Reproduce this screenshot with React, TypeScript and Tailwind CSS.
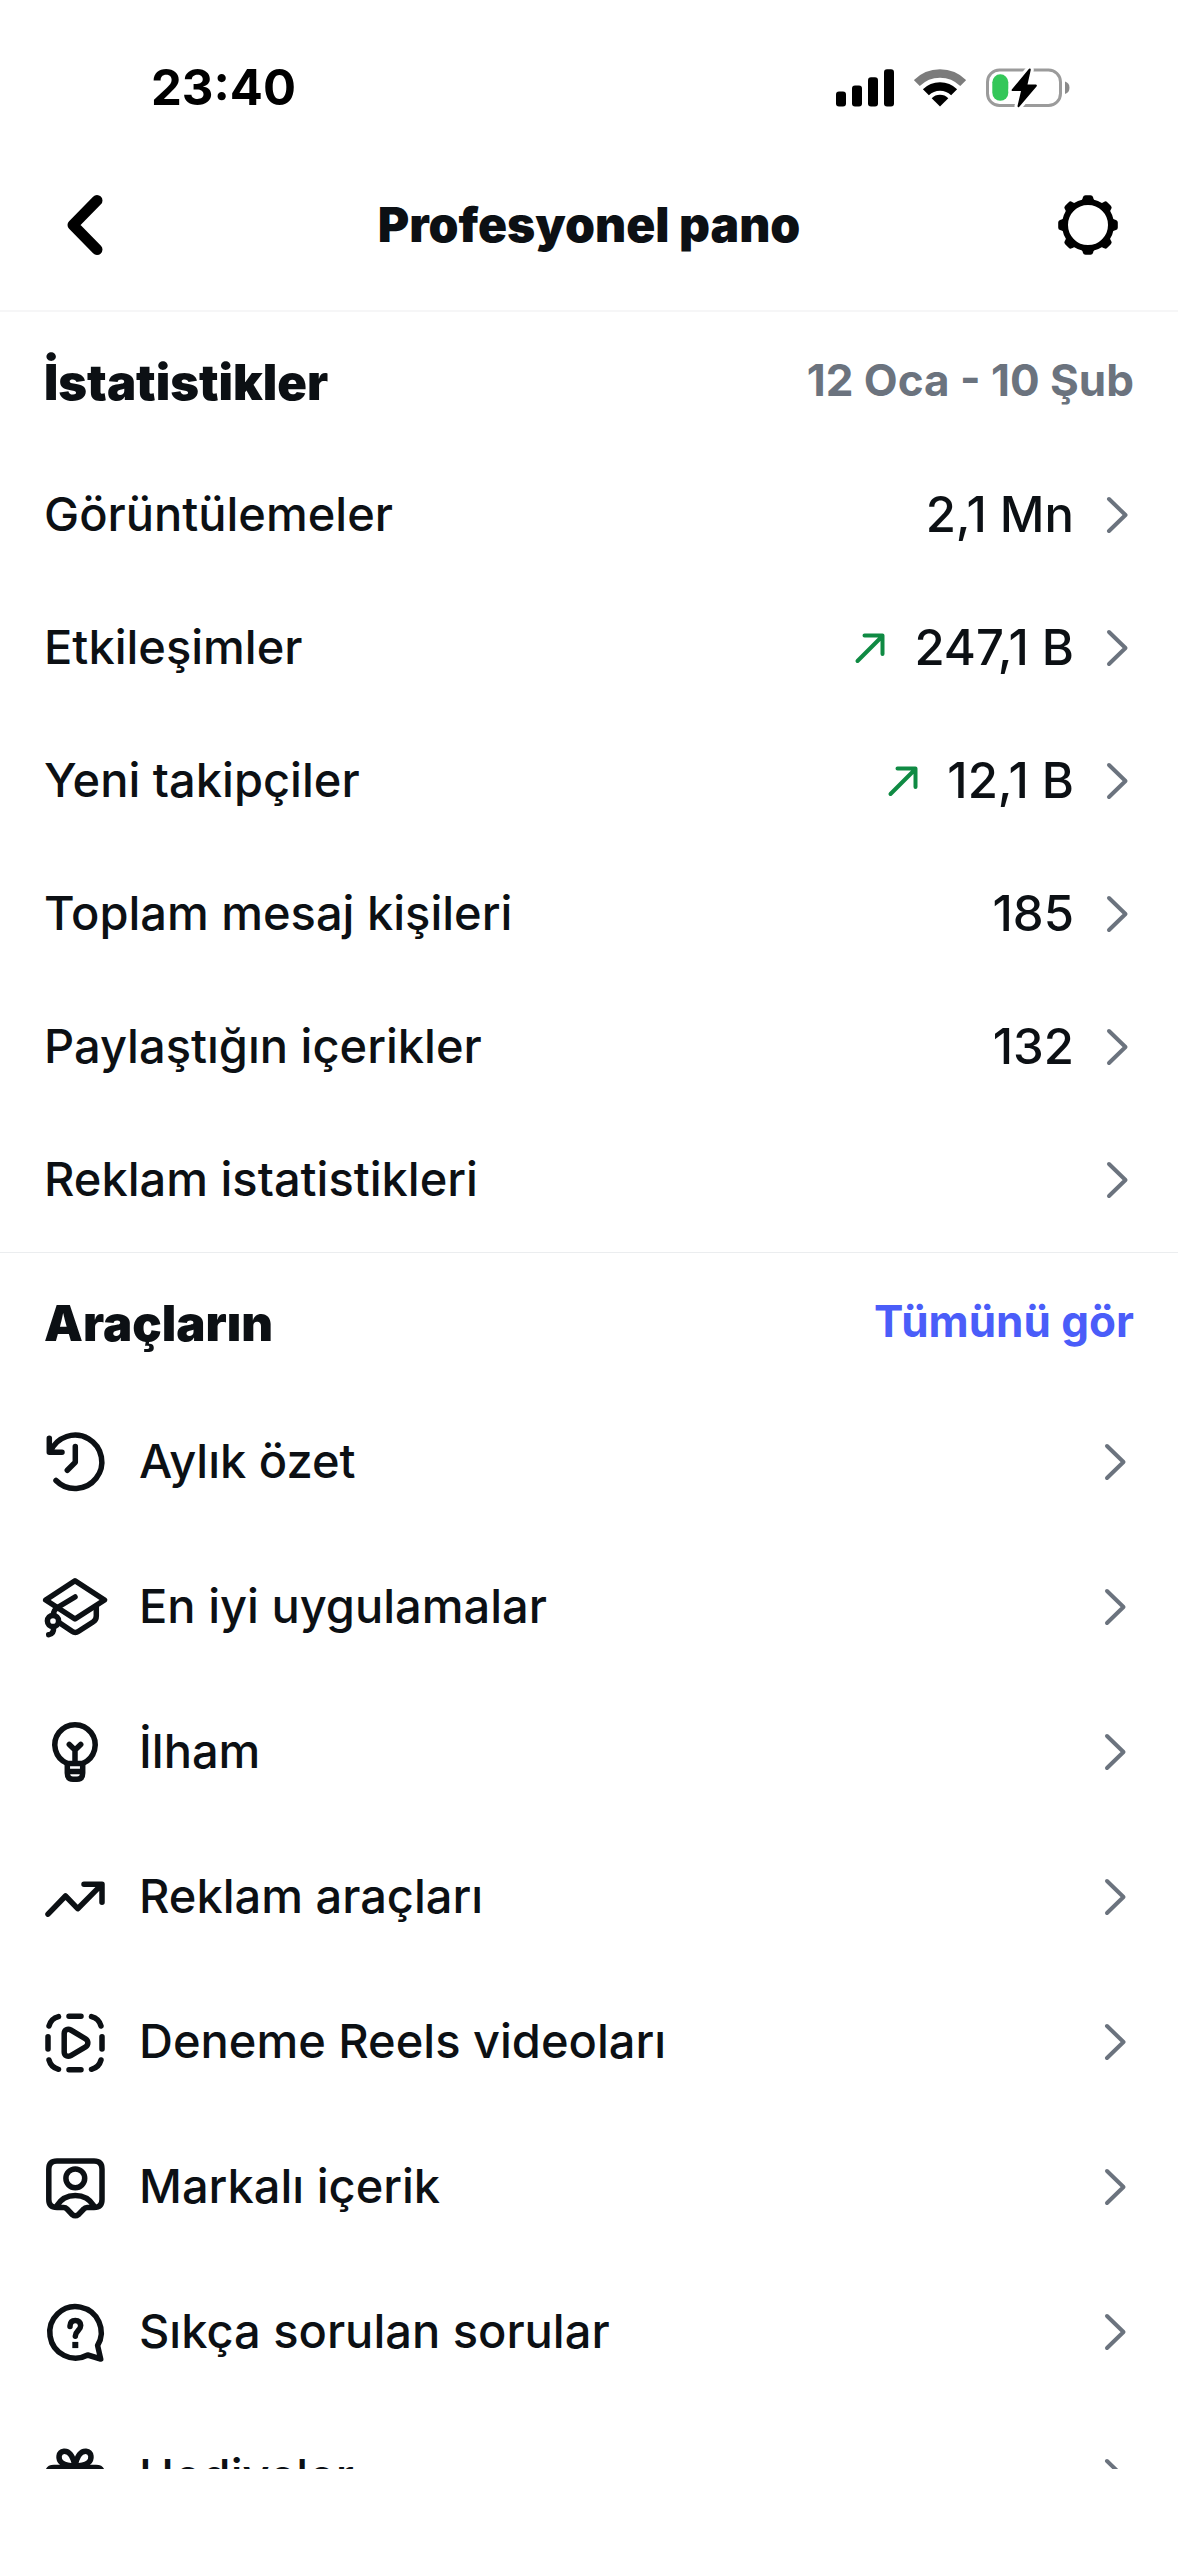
import type { ReactNode } from 'react'

type Stat = { label: string; value?: string; rising?: boolean }
type Tool = { label: string; icon: ReactNode }

const stats: Stat[] = [
  { label: 'Görüntülemeler', value: '2,1 Mn' },
  { label: 'Etkileşimler', value: '247,1 B', rising: true },
  { label: 'Yeni takipçiler', value: '12,1 B', rising: true },
  { label: 'Toplam mesaj kişileri', value: '185' },
  { label: 'Paylaştığın içerikler', value: '132' },
  { label: 'Reklam istatistikleri' },
]

const tools: Tool[] = [
  {
    label: 'Aylık özet',
    icon: (
      <>
        <path d="M14 51.5A26.7 26.7 0 1 0 8.5 22.5" />
        <path d="M7.3 9.3V23.3H20M33.3 17.5V33.3L25.3 41.3" />
      </>
    ),
  },
  {
    label: 'En iyi uygulamalar',
    icon: (
      <>
        <path d="M33 6.7 62.5 26 33 45 3.7 26Z" />
        <path d="M33 23 15.5 33.5Q11.6 35.8 11.3 41" />
        <circle cx="11" cy="47" r="5.6" />
        <path d="M11.6 53Q12 60.3 6.7 60.7M18.5 49.5 30 57.3Q33.3 59.6 36.6 57.3L51 48Q54.3 46 54.3 42V32.5" />
      </>
    ),
  },
  {
    label: 'İlham',
    icon: (
      <>
        <path d="M25.3 44.5A20.2 20.2 0 1 1 40.7 44.5" />
        <path d="M25.3 44.5H40.7V54Q40.7 60.3 35 60.3H31Q25.3 60.3 25.3 54ZM25.3 52.6H40.7" />
        <path d="M27.3 25.5 33 31 38.7 25.5M33 31V44" />
      </>
    ),
  },
  {
    label: 'Reklam araçları',
    icon: <path d="M6 50.2 23.5 32 35.7 44.7 59.6 20.6M42 20.3H60V38.2" />,
  },
  {
    label: 'Deneme Reels videoları',
    icon: (
      <>
        <path d="M27 7.2H39M27 60.7H39M6 27.8V40M60 27.8V40" />
        <path d="M7 17Q9 9.5 16.5 7.6M49.5 7.6Q57 9.5 59 17M59 51Q57 58.5 49.5 60.3M16.5 60.3Q9 58.5 7 51" />
        <path d="M22.2 24.5C22.2 20.8 25.8 19.3 28.8 21L43.6 29.8C46.6 31.6 46.6 36 43.6 37.8L28.8 46.6C25.8 48.3 22.2 46.8 22.2 43Z" />
      </>
    ),
  },
  {
    label: 'Markalı içerik',
    icon: (
      <>
        <path d="M15 7H52Q60 7 60 15V45.5Q60 53.5 52 53.5H45Q43 53.5 41.8 55L36.5 60.5Q33.3 63 30.2 60.5L25 55Q23.6 53.5 21.6 53.5H15Q6.8 53.5 6.8 45.5V15Q6.8 7 15 7Z" />
        <circle cx="33.3" cy="24.3" r="9.4" />
        <path d="M14.7 52C23 38 43.5 38 52 52" />
      </>
    ),
  },
  {
    label: 'Sıkça sorulan sorular',
    icon: (
      <>
        <path d="M45.7 56A25.7 25.7 0 1 1 55.6 46.5L58.7 60Z" />
        <path d="M28 27.5V27Q28.3 21.5 33.3 21.5T38.7 26.5C38.7 31.5 33.5 31.5 33.3 37.2" />
        <path d="M33.3 45.9V46.1" strokeWidth="6" strokeLinecap="square" />
      </>
    ),
  },
  {
    label: 'Hediyeler',
    icon: (
      <>
        <path d="M33 22C31 12 27 7 22 7.3C16 8 15.5 15.5 20 19Q24 22 33 22C35 12 39 7 44 7.3C50 8 50.5 15.5 46 19Q42 22 33 22Z" />
        <path d="M12 23.5H54Q60 23.5 60 29V34H6V29Q6 23.5 12 23.5ZM10 34V54Q10 60 16 60H50Q56 60 56 54V34M33 23V60" />
      </>
    ),
  },
]

const gearTeeth = [0, 45, 90, 135, 180, 225, 270, 315]

const Chevron = () => (
  <svg viewBox="0 0 28 40" className="h-10 w-7 shrink-0 text-[#6b737e]" fill="none" aria-hidden>
    <path d="M3 4 19.5 20 3 36" stroke="currentColor" strokeWidth="4" strokeLinecap="round" strokeLinejoin="round" />
  </svg>
)

const RisingArrow = () => (
  <svg viewBox="0 0 32 32" className="size-8 text-[#0f8a43]" fill="none" role="img" aria-label="Artış">
    <path
      d="M3.5 29 28 4.5M10.5 3.5H28.5V22"
      stroke="currentColor"
      strokeWidth="4"
      strokeLinecap="round"
      strokeLinejoin="round"
    />
  </svg>
)

const StatusBar = () => (
  <div className="flex h-[140px] shrink-0 items-center justify-between pt-[35px] pr-[108px] pl-[151px] text-black">
    <time className="text-[49px] leading-none font-bold">23:40</time>
    <div className="flex items-center gap-5">
      <svg viewBox="0 0 58 38" className="h-[38px] w-[58px]" fill="currentColor" aria-hidden>
        <rect y="22.5" width="10" height="15" rx="3" />
        <rect x="16" y="16.5" width="10" height="21" rx="3" />
        <rect x="32" y="8.3" width="10" height="29.2" rx="3" />
        <rect x="48" y="0.3" width="10" height="37.2" rx="3" />
      </svg>
      <svg viewBox="0 0 52 38" className="h-[38px] w-[52px]" fill="none" aria-hidden>
        <path d="M2.8 14.1A32.8 32.8 0 0 1 49.2 14.1" stroke="#7c7c7c" strokeWidth="8.3" />
        <path d="M11.9 23.2A20 20 0 0 1 40.1 23.2" stroke="currentColor" strokeWidth="8.5" />
        <path d="M26 37.5 17.7 29.2A11.8 11.8 0 0 1 34.3 29.2Z" fill="currentColor" />
      </svg>
      <svg viewBox="0 0 84 40" className="h-10 w-[84px]" fill="none" aria-hidden>
        <rect x="1.5" y="2" width="73" height="35.5" rx="12" stroke="#9b9b9b" strokeWidth="3" />
        <path d="M79 13.5Q83.5 15 83.5 19.7T79 26Z" fill="#8a8a8a" />
        <rect x="6.3" y="6.3" width="16" height="26.5" rx="8" fill="#34c759" />
        <path
          d="M43 .8 25.8 21.5Q25 23 26.5 23H35L31.5 38Q31.8 40 33.3 38.7L50.5 18.5Q51.5 17 50 16.5H41.5L44.8 1.8Q44.6-.3 43 .8Z"
          fill="currentColor"
          stroke="white"
          strokeWidth="6"
          paintOrder="stroke"
        />
      </svg>
    </div>
  </div>
)

const Header = () => (
  <header className="grid h-[172px] shrink-0 grid-cols-[1fr_auto_1fr] items-center border-b-2 border-[#f6f6f7] px-[57px]">
    <button type="button" aria-label="Geri" className="size-[66px]">
      <svg viewBox="0 0 66 66" fill="none" aria-hidden>
        <path d="M40 8.5 16 33 40 57.5" stroke="black" strokeWidth="11" strokeLinecap="round" strokeLinejoin="round" />
      </svg>
    </button>
    <h1 className="text-5xl font-black">Profesyonel pano</h1>
    <button type="button" aria-label="Ayarlar" className="size-[66px] justify-self-end">
      <svg viewBox="0 0 66 66" fill="none" aria-hidden>
        <circle cx="33" cy="33" r="23" stroke="black" strokeWidth="6" />
        {gearTeeth.map((angle) => (
          <path
            key={angle}
            d="M24 10C27 9 27.5 7 28 5Q28.5 3.2 30.5 3.2H35.5Q37.5 3.2 38 5C38.5 7 39 9 42 10L33 13Z"
            transform={`rotate(${angle} 33 33)`}
            fill="black"
          />
        ))}
      </svg>
    </button>
  </header>
)

export default function App() {
  return (
    <div
      lang="tr"
      className="flex h-screen flex-col bg-white font-['Inter','Liberation_Sans',sans-serif] text-[#0c1014]"
    >
      <StatusBar />
      <Header />

      <main className="min-h-0 flex-1 overflow-y-auto [scrollbar-width:none]">
        <section className="border-b border-[#ebedef] pb-1.5">
          <div className="flex h-[136px] items-center justify-between px-11">
            <h2 className="pt-1 text-[49px] leading-none font-black">İstatistikler</h2>
            <span className="text-[44px] leading-none font-bold text-[#6b737e]">12 Oca - 10 Şub</span>
          </div>
          <ul>
            {stats.map((stat) => (
              <li key={stat.label}>
                <a href="#" className="flex h-[133px] items-center px-11 text-[47px] font-medium">
                  <span className="flex-1">{stat.label}</span>
                  {stat.rising && <RisingArrow />}
                  {stat.value && <span className="mr-8 ml-7 text-[49px]">{stat.value}</span>}
                  <Chevron />
                </a>
              </li>
            ))}
          </ul>
        </section>

        <section>
          <div className="flex h-[136px] items-center justify-between px-11">
            <h2 className="pt-1 text-[49px] leading-none font-black">Araçların</h2>
            <a href="#" className="text-[44px] leading-none font-bold text-[#4a5df9]">
              Tümünü gör
            </a>
          </div>
          <ul>
            {tools.map((tool) => (
              <li key={tool.label}>
                <a href="#" className="flex h-[145px] items-center gap-[31px] pr-[46px] pl-[42px] text-[47px] font-medium">
                  <svg
                    viewBox="0 0 66 66"
                    className="size-[66px] shrink-0"
                    fill="none"
                    stroke="currentColor"
                    strokeWidth="5.5"
                    strokeLinecap="round"
                    strokeLinejoin="round"
                    aria-hidden
                  >
                    {tool.icon}
                  </svg>
                  <span className="flex-1">{tool.label}</span>
                  <Chevron />
                </a>
              </li>
            ))}
          </ul>
        </section>
      </main>

      {/* home indicator area */}
      <div className="h-[91px] shrink-0" />
    </div>
  )
}
